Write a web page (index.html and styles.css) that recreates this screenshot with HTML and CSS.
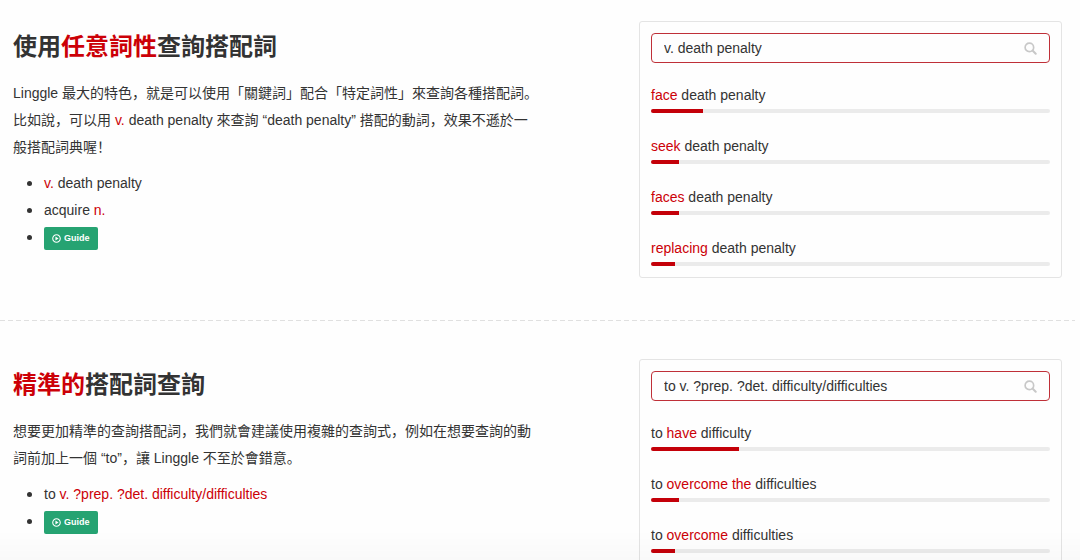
FILE: index.html
```html
<!DOCTYPE html>
<html lang="zh">
<head>
<meta charset="utf-8">
<title>Linggle</title>
<link rel="stylesheet" href="styles.css">
</head>
<body>
<svg class="sprite" aria-hidden="true">
  <symbol id="icon-search" viewBox="0 0 14 14">
    <circle cx="5.8" cy="5.8" r="4.6" fill="none" stroke="currentColor" stroke-width="1.8"/>
    <path d="M9.2 9.2 12.6 12.6" stroke="currentColor" stroke-width="2.2" stroke-linecap="round"/>
  </symbol>
  <symbol id="icon-play" viewBox="0 0 10 10">
    <circle cx="5" cy="5" r="4.2" fill="none" stroke="currentColor" stroke-width="1.2"/>
    <path d="M3.8 2.8 7.3 5 3.8 7.2Z" fill="currentColor"/>
  </symbol>
</svg>
<main class="page">
  <section class="feature">
    <div class="intro">
      <h2 class="title">使用<em class="hl">任意詞性</em>查詢搭配詞</h2>
      <p class="text">Linggle 最大的特色，就是可以使用「關鍵詞」配合「特定詞性」來查詢各種搭配詞。比如說，可以用 <em class="hl">v.</em> death penalty 來查詢 “death penalty” 搭配的動詞，效果不遜於一般搭配詞典喔！</p>
      <ul class="examples">
        <li><em class="hl">v.</em> death penalty</li>
        <li>acquire <em class="hl">n.</em></li>
        <li><button class="guide" type="button"><svg class="guide-icon" aria-hidden="true"><use href="#icon-play"/></svg>Guide</button></li>
      </ul>
    </div>
    <div class="panel">
      <div class="search">
        <input class="query" type="text" aria-label="查詢" value="v. death penalty">
        <button class="go" type="button" aria-label="搜尋"><svg class="go-icon" aria-hidden="true"><use href="#icon-search"/></svg></button>
      </div>
      <ul class="results">
        <li><span><em class="hl">face</em> death penalty</span><div class="bar"><div class="fill" style="width:13%"></div></div></li>
        <li><span><em class="hl">seek</em> death penalty</span><div class="bar"><div class="fill" style="width:7%"></div></div></li>
        <li><span><em class="hl">faces</em> death penalty</span><div class="bar"><div class="fill" style="width:7%"></div></div></li>
        <li><span><em class="hl">replacing</em> death penalty</span><div class="bar"><div class="fill" style="width:6%"></div></div></li>
      </ul>
    </div>
  </section>
  <hr class="divider">
  <section class="feature">
    <div class="intro">
      <h2 class="title"><em class="hl">精準的</em>搭配詞查詢</h2>
      <p class="text">想要更加精準的查詢搭配詞，我們就會建議使用複雜的查詢式，例如在想要查詢的動詞前加上一個 “to”，讓 Linggle 不至於會錯意。</p>
      <ul class="examples">
        <li>to <em class="hl">v. ?prep. ?det. difficulty/difficulties</em></li>
        <li><button class="guide" type="button"><svg class="guide-icon" aria-hidden="true"><use href="#icon-play"/></svg>Guide</button></li>
      </ul>
    </div>
    <div class="panel">
      <div class="search">
        <input class="query" type="text" aria-label="查詢" value="to v. ?prep. ?det. difficulty/difficulties">
        <button class="go" type="button" aria-label="搜尋"><svg class="go-icon" aria-hidden="true"><use href="#icon-search"/></svg></button>
      </div>
      <ul class="results">
        <li><span>to <em class="hl">have</em> difficulty</span><div class="bar"><div class="fill" style="width:22%"></div></div></li>
        <li><span>to <em class="hl">overcome the</em> difficulties</span><div class="bar"><div class="fill" style="width:7%"></div></div></li>
        <li><span>to <em class="hl">overcome</em> difficulties</span><div class="bar"><div class="fill" style="width:6%"></div></div></li>
      </ul>
    </div>
  </section>
</main>
<div class="fade"></div>
</body>
</html>
```
FILE: styles.css
```css
* { box-sizing: border-box; }

html { scrollbar-width: none; }

body {
  margin: 0;
  background: #fefefe;
  color: #333;
  font: 14px/27px "Liberation Sans", "Noto Sans CJK SC", sans-serif;
}

.sprite { display: none; }

.page { margin-right: 5px; }

.feature {
  display: grid;
  grid-template-columns: minmax(0, 1fr) minmax(0, 423px);
  column-gap: 99px;
  align-items: start;
  padding: 38px 13px 42px;
}

.feature:first-child { padding-top: 21px; }

.divider {
  height: 1px;
  margin: 0;
  border: 0;
  background: repeating-linear-gradient(90deg, #e0e0e0 0 5px, transparent 5px 8px);
}

.hl {
  color: #cc0007;
  font-style: normal;
}

.intro { padding-top: 8px; }

.title {
  margin: 0 0 16px;
  font-size: 24px;
  line-height: 35px;
  font-weight: 700;
}

.text { margin: 0 0 8px; }

.examples {
  margin: 0;
  padding-left: 31px;
  line-height: 26px;
}

.examples li::marker { font-size: 18px; }

.guide {
  display: inline-flex;
  align-items: center;
  gap: 3px;
  height: 23px;
  padding: 0 8px;
  border: 0;
  border-radius: 2px;
  background: #26a372;
  color: #fff;
  font: bold 9px/15px "Liberation Sans", sans-serif;
  vertical-align: middle;
}

.guide-icon {
  width: 9px;
  height: 9px;
}

.panel {
  padding: 11px;
  border: 1px solid #e4e4e4;
  border-radius: 3px;
}

.search {
  display: flex;
  align-items: center;
  height: 30px;
  margin-bottom: 19px;
  padding: 0 12px;
  border: 1px solid #bf3038;
  border-radius: 4px;
}

.query {
  flex: 1;
  min-width: 0;
  padding: 0;
  border: 0;
  outline: 0;
  background: none;
  color: #333;
  font: 14px/20px "Liberation Sans", sans-serif;
}

.go {
  display: flex;
  padding: 0;
  border: 0;
  background: none;
  color: #c8c8c8;
}

.go-icon {
  width: 13px;
  height: 13px;
}

.results {
  display: grid;
  gap: 20px;
  margin: 0;
  padding: 0;
  list-style: none;
}

.bar {
  height: 4px;
  border-radius: 2px;
  background: #ebebeb;
  overflow: hidden;
}

.fill {
  height: 100%;
  background: #c40009;
}

.fade {
  position: fixed;
  inset: auto 0 0;
  height: 30px;
  background: linear-gradient(transparent, rgb(0 0 0 / 2%));
  pointer-events: none;
}
```
